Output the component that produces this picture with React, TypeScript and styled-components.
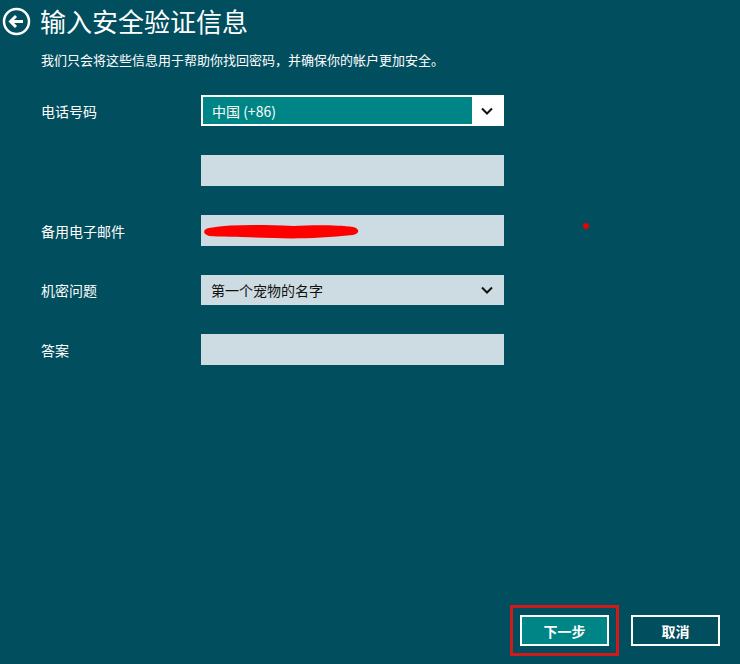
import React from "react";
import styled, { createGlobalStyle } from "styled-components";

const Global = createGlobalStyle`
  html, body { margin: 0; padding: 0; background: #014e5e; }
  body { font-family: "Microsoft YaHei", "Noto Sans CJK SC", sans-serif; }
`;

const Page = styled.div`
  position: relative;
  width: 740px;
  height: 664px;
  background: #014e5e;
  color: #fff;
  display: flex;
  flex-direction: column;
  overflow: hidden;
`;

const Header = styled.div`
  display: flex;
  align-items: center;
  gap: 9px;
  padding: 5px 0 0 2px;
  height: 32px;
`;

const Title = styled.h1`
  margin: 0;
  font-size: 26px;
  font-weight: 400;
  line-height: 32px;
`;

const Sub = styled.p`
  margin: 14px 0 0 41px;
  font-size: 13px;
  line-height: 18px;
`;

const Form = styled.div`
  margin: 26px 0 0 41px;
  display: grid;
  grid-template-columns: 160px 303px;
  row-gap: 29px;
  align-items: center;
`;

const Label = styled.div`
  font-size: 14px;
  line-height: 20px;
`;

const Field = styled.div<{ $h?: number }>`
  position: relative;
  height: ${(p) => p.$h ?? 31}px;
  background: #cddce2;
  color: #111;
  font-size: 14px;
  display: flex;
  align-items: center;
  padding: 0 10px;
  box-sizing: border-box;
  justify-content: space-between;
`;

const PhoneSelect = styled.div`
  height: 31px;
  border: 2px solid #fff;
  box-sizing: border-box;
  display: flex;
  background: #fff;
`;

const PhoneValue = styled.div`
  flex: 1;
  background: #008587;
  color: #fff;
  font-size: 14px;
  display: flex;
  align-items: center;
  padding-left: 9px;
`;

const ChevBox = styled.div`
  width: 30px;
  display: flex;
  align-items: center;
  justify-content: center;
`;

const Scribble = styled.svg`
  position: absolute;
  left: 2px;
  top: 8px;
`;

const Dot = styled.div`
  position: absolute;
  left: 583px;
  top: 223px;
  width: 6px;
  height: 6px;
  border-radius: 50%;
  background: #e00;
`;

const Footer = styled.div`
  margin-top: auto;
  display: flex;
  justify-content: flex-end;
  gap: 22px;
  padding: 0 20px 18px 0;
`;

const Highlight = styled.div`
  border: 3px solid #d21a1a;
  padding: 7px;
  margin: -10px;
`;

const Btn = styled.button<{ $primary?: boolean }>`
  width: 89px;
  height: 31px;
  border: 2px solid #fff;
  background: ${(p) => (p.$primary ? "#008587" : "#014e5e")};
  color: #fff;
  font-family: inherit;
  font-size: 14px;
  font-weight: 700;
  display: block;
`;

const Chevron = ({ c }: { c: string }) => (
  <svg width="14" height="10" viewBox="0 0 14 10">
    <path d="M2 2.5 L7 7.5 L12 2.5" fill="none" stroke={c} strokeWidth="2" />
  </svg>
);

export default function App() {
  return (
    <Page>
      <Global />
      <Header>
        <svg width="29" height="29" viewBox="0 0 29 29">
          <circle cx="14.5" cy="14.5" r="12.5" fill="none" stroke="#fff" strokeWidth="2.5" />
          <path d="M21 14.5 H9 M14 9 L8.5 14.5 L14 20" fill="none" stroke="#fff" strokeWidth="3" />
        </svg>
        <Title>输入安全验证信息</Title>
      </Header>
      <Sub>我们只会将这些信息用于帮助你找回密码，并确保你的帐户更加安全。</Sub>
      <Form>
        <Label>电话号码</Label>
        <PhoneSelect>
          <PhoneValue>中国 (+86)</PhoneValue>
          <ChevBox><Chevron c="#111" /></ChevBox>
        </PhoneSelect>
        <div />
        <Field />
        <Label>备用电子邮件</Label>
        <Field>
          <Scribble width="160" height="18" viewBox="0 0 160 18">
            <path d="M6 5 C30 1 60 2 90 3 C110 2 135 2 150 4 C158 6 156 11 150 12 C120 15 95 16 70 15 C45 14 20 14 6 13 C-1 11 0 6 6 5 Z" fill="#ff0000" />
          </Scribble>
        </Field>
        <Label>机密问题</Label>
        <Field $h={30}>
          第一个宠物的名字
          <Chevron c="#111" />
        </Field>
        <Label>答案</Label>
        <Field />
      </Form>
      <Dot />
      <Footer>
        <Highlight><Btn $primary>下一步</Btn></Highlight>
        <Btn>取消</Btn>
      </Footer>
    </Page>
  );
}
